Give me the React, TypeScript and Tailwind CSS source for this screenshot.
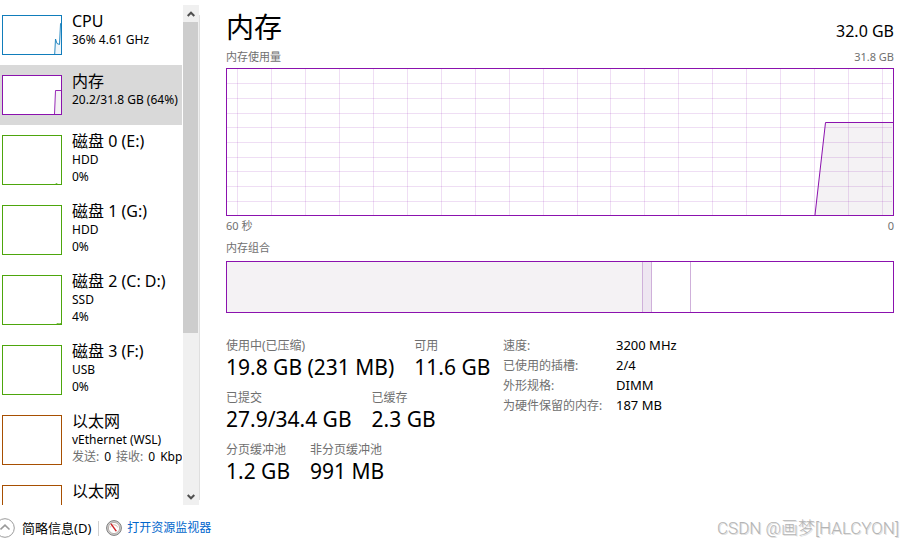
import React, { useState } from "react";

const devices = [
    { id: "cpu", name: "CPU", lines: ["36% 4.61 GHz"], color: "#117dbb", fill: "#f1f6fa", points: "51.7,38 52.5,23 54,27.5 56.5,28.5 57.5,8 58,7" },
    { id: "memory", name: "内存", lines: ["20.2/31.8 GB (64%)"], color: "#8b12ae", fill: "#f4f2f4", points: "51.5,38 52.5,14.5 58,14.5" },
    { id: "disk0", name: "磁盘 0 (E:)", lines: ["HDD", "0%"], color: "#4da60c", fill: "#eff7e9", points: "52.5,48 53.5,47.5 54.5,48" },
    { id: "disk1", name: "磁盘 1 (G:)", lines: ["HDD", "0%"], color: "#4da60c", fill: "#eff7e9", points: "" },
    { id: "disk2", name: "磁盘 2 (C: D:)", lines: ["SSD", "4%"], color: "#4da60c", fill: "#eff7e9", points: "53.5,48 54.5,47.5 56,48 58,47.5" },
    { id: "disk3", name: "磁盘 3 (F:)", lines: ["USB", "0%"], color: "#4da60c", fill: "#eff7e9", points: "" },
    { id: "eth0", name: "以太网", lines: ["vEthernet (WSL)"], net: ["0", "0"], color: "#a74f01", fill: "#fcf3eb", points: "" },
    { id: "eth1", name: "以太网", lines: [], color: "#a74f01", fill: "#fcf3eb", points: "" },
];

const statRows = [
    [{ label: "使用中(已压缩)", value: "19.8 GB (231 MB)" }, { label: "可用", value: "11.6 GB" }],
    [{ label: "已提交", value: "27.9/34.4 GB" }, { label: "已缓存", value: "2.3 GB" }],
    [{ label: "分页缓冲池", value: "1.2 GB" }, { label: "非分页缓冲池", value: "991 MB" }],
];

const hardware = [
    ["速度:", "3200 MHz"],
    ["已使用的插槽:", "2/4"],
    ["外形规格:", "DIMM"],
    ["为硬件保留的内存:", "187 MB"],
];

function Thumb({ device }: any) {
    const tall = device.id !== "cpu" && device.id !== "memory";
    const h = tall ? 48 : 38;

    return (
        <svg
            className={tall ? "w-[60px] h-[50px] shrink-0" : "w-[60px] h-[40px] shrink-0"}
            viewBox={`-1 -1 60 ${h + 2}`}
        >
            <rect x="-0.5" y="-0.5" width="59" height={h + 1} fill="#fff" stroke={device.color} />
            {device.points && (
                <>
                    <polygon points={`${device.points} 58,${h}`} fill={device.fill} />
                    <polyline points={device.points} fill="none" stroke={device.color} strokeWidth="0.9" />
                </>
            )}
        </svg>
    );
}

function Sidebar({ selected, onSelect }: any) {
    return (
        <aside className="flex w-[200px] shrink-0">
            <div className="w-[182px] overflow-hidden">
                {devices.map(d => (
                    <button
                        key={d.id}
                        onClick={() => onSelect(d.id)}
                        className={`flex w-full gap-[10px] pl-[2px] text-left items-start ${d.id === selected ? "bg-[#d9d9d9]" : ""}`}
                    >
                        <span className="flex py-[10px]">
                            <Thumb device={d} />
                        </span>
                        <span className="block pt-[6px] whitespace-nowrap">
                            <span className="block text-[16px] leading-[20px]">{d.name}</span>
                            {d.lines.map(line => (
                                <span key={line} className="block text-[12px] leading-[17px]">{line}</span>
                            ))}
                            {d.net && (
                                <span className="flex gap-[5px] text-[12px] leading-[17px]">
                                    <span className="text-[#707070]">发送:</span>
                                    <span>{d.net[0]}</span>
                                    <span className="text-[#707070]">接收:</span>
                                    <span>{d.net[1]}</span>
                                    <span>Kbps</span>
                                </span>
                            )}
                        </span>
                    </button>
                ))}
            </div>

            {/* Scrollbar */}
            <div className="ml-[1px] w-[16px] flex flex-col bg-[#f0f0f0]">
                <button aria-label="向上滚动" className="h-[17px] flex items-center justify-center">
                    <svg width="8" height="6" viewBox="0 0 8 6">
                        <path d="M0.7 5 L4 1.7 L7.3 5" fill="none" stroke="#505050" strokeWidth="2" />
                    </svg>
                </button>
                <div className="flex-1 min-h-0">
                    <div className="w-[15px] h-2/3 bg-[#cdcdcd]"></div>
                </div>
                <button aria-label="向下滚动" className="h-[17px] flex items-center justify-center">
                    <svg width="8" height="6" viewBox="0 0 8 6">
                        <path d="M0.7 1 L4 4.3 L7.3 1" fill="none" stroke="#505050" strokeWidth="2" />
                    </svg>
                </button>
            </div>
            <div className="w-px mt-[10px] mb-[5px] bg-[#dfdfdf]"></div>
        </aside>
    );
}

function UsageChart() {
    const cols = Array.from({ length: 20 }, (_, i) => Math.round(10 + i * 33.95) + 0.5);
    const rows = Array.from({ length: 9 }, (_, i) => Math.round((i + 1) * 14.7 - 0.5) + 0.5);

    return (
        <div className="border border-[#8b12ae]">
            <svg className="block w-full h-[146px]" viewBox="0 0 666 146" preserveAspectRatio="none">
                <polygon points="588,146 598.5,53.5 666,53.5 666,146" fill="#f4f2f4" />
                <g stroke="#8b12ae" strokeOpacity="0.14">
                    {cols.map(x => <line key={x} x1={x} y1="0" x2={x} y2="146" />)}
                    {rows.map(y => <line key={y} x1="0" y1={y} x2="665" y2={y} />)}
                </g>
                <polyline points="588,146 598.5,53.5 666,53.5" fill="none" stroke="#8b12ae" />
            </svg>
        </div>
    );
}

function Composition() {
    return (
        <div className="flex h-[52px] border border-[#8b12ae]">
            <div className="w-[62.5%] bg-[#f4f2f4] border-r border-[#cfb0da]"></div>
            <div className="w-[1.35%] bg-[#eee6f1] border-r border-[#cfb0da]"></div>
            <div className="w-[5.85%] border-r border-[#cfb0da]"></div>
        </div>
    );
}

export default function App() {
    const [selected, setSelected] = useState("memory");

    return (
        <div className="h-screen flex flex-col overflow-hidden bg-white text-black font-['Noto_Sans','Noto_Sans_CJK_SC',sans-serif]">
            <div className="flex flex-1 min-h-0 pt-[5px]">
                <Sidebar selected={selected} onSelect={setSelected} />

                <main className="flex-1 min-w-0 pl-[26px] pr-[9px]">
                    <div className="flex justify-between items-end h-[44px]">
                        <h1 className="text-[28px] leading-[44px]">内存</h1>
                        <span className="text-[16px] leading-[36px]">32.0 GB</span>
                    </div>
                    <div className="flex justify-between h-[19px] text-[11px] leading-[16px] text-[#707070]">
                        <span>内存使用量</span>
                        <span>31.8 GB</span>
                    </div>
                    <UsageChart />
                    <div className="flex justify-between text-[11px] leading-[20px] text-[#707070]">
                        <span>60 秒</span>
                        <span>0</span>
                    </div>
                    <div className="h-[25px] text-[11px] leading-[24px] text-[#707070]">内存组合</div>
                    <Composition />

                    {/* Details */}
                    <div className="flex pt-[23px]">
                        <div className="w-[277px] shrink-0 whitespace-nowrap">
                            {statRows.map(row => (
                                <dl key={row[0].label} className="flex gap-[20px] h-[52px]">
                                    {row.map(s => (
                                        <div key={s.label}>
                                            <dt className="text-[12px] leading-[20px] text-[#707070]">{s.label}</dt>
                                            <dd className="text-[21px] leading-[22px]">{s.value}</dd>
                                        </div>
                                    ))}
                                </dl>
                            ))}
                        </div>
                        <table className="self-start">
                            <tbody>
                                {hardware.map(([label, value]) => (
                                    <tr key={label} className="h-[20px]">
                                        <th scope="row" className="w-[113px] p-0 text-left align-top font-normal text-[12px] leading-[20px] text-[#707070]">{label}</th>
                                        <td className="p-0 align-top text-[13px] leading-[18px]">{value}</td>
                                    </tr>
                                ))}
                            </tbody>
                        </table>
                    </div>
                </main>
            </div>

            <footer className="h-[35px] shrink-0 flex items-center pt-[11px] whitespace-nowrap">
                <button className="-ml-[5px] flex items-center gap-[7px] text-[13px] leading-[20px]">
                    <svg width="20" height="20" viewBox="0 0 20 20" fill="none">
                        <circle cx="10" cy="10" r="9.3" stroke="#9a9a9a" />
                        <path d="M5.5 11.5 L10 7.2 L14.5 11.5" stroke="#9a9a9a" strokeWidth="1.6" />
                    </svg>
                    简略信息(D)
                </button>
                <span className="w-px h-[15px] mx-[7px] bg-[#d0d0d0]"></span>
                <a href="#" className="flex items-center gap-[5px] text-[12px] leading-[20px] text-[#0066cc]">
                    <svg width="16" height="16" viewBox="0 0 16 16">
                        <circle cx="8" cy="8" r="7.4" fill="#d2d2d2" stroke="#7d7d7d" />
                        <circle cx="8" cy="8" r="5.6" fill="#fff" stroke="#a9a09c" strokeWidth="0.8" />
                        <path d="M4.2 7.5 A4 4 0 0 1 11.8 7.5" fill="none" stroke="#d9b3a8" strokeWidth="0.9" />
                        <path d="M4.2 3.8 L5.6 3.6 L11 11 L9.6 11.6 Z" fill="#cc1f24" />
                    </svg>
                    打开资源监视器
                </a>
                <span className="ml-auto pr-[4px] font-['Roboto','Noto_Sans_CJK_SC',sans-serif] font-light text-[17px] leading-[20px] text-[#b4b4b4] [text-shadow:1px_1px_0_#dedede]">
                    CSDN @画梦[HALCYON]
                </span>
            </footer>
        </div>
    );
}
